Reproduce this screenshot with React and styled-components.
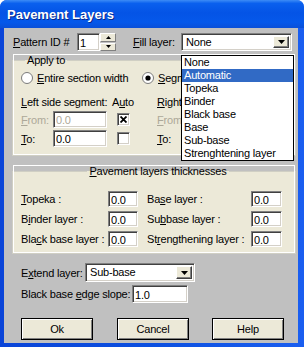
import React from "react";
import styled, { createGlobalStyle } from "styled-components";

const GlobalStyle = createGlobalStyle`
  html, body {
    margin: 0;
    padding: 0;
    background: #ffffff;
  }
  body {
    font-family: "Liberation Sans", Arial, sans-serif;
    font-size: 11px;
    letter-spacing: -0.2px;
    color: #000;
  }
`;

const layers = [
  "None",
  "Automatic",
  "Topeka",
  "Binder",
  "Black base",
  "Base",
  "Sub-base",
  "Strenghtening layer"
];

const Window = styled.div`
  position: relative;
  width: 304px;
  height: 347px;
  display: flex;
  flex-direction: column;
  background: linear-gradient(to right, #0a44d8 0%, #0b4fe0 50%, #1a5ef0 100%);
  border-radius: 7px 7px 0 0;
  overflow: hidden;
`;

const TitleBar = styled.div`
  height: 28px;
  flex: none;
  display: flex;
  align-items: center;
  padding-left: 7px;
  background: linear-gradient(
    to bottom,
    #3d8cf6 0%,
    #0a60ee 12%,
    #0454e6 45%,
    #0558ea 80%,
    #0a4fd8 100%
  );
  color: #fff;
  font-weight: bold;
  font-size: 13px;
  letter-spacing: 0;
  text-shadow: 1px 1px 0 #0b2a8a;
`;

const Body = styled.div`
  flex: 1;
  margin: 0 6px 4px 4px;
  background: #c0c0c0;
  padding: 5px 2px 0 8px;
  display: flex;
  flex-direction: column;
`;

const Row = styled.div`
  display: flex;
  align-items: center;
  height: ${(p) => p.h || 18}px;
  margin-top: ${(p) => p.mt || 0}px;
  margin-left: ${(p) => p.ml || 0}px;
`;

const Label = styled.span`
  flex: none;
  width: ${(p) => (p.w ? `${p.w}px` : "auto")};
  margin-left: ${(p) => p.ml || 0}px;
  color: ${(p) => (p.disabled ? "#aca899" : "#000")};
  white-space: nowrap;
  line-height: 14px;
`;

const TextBox = styled.input`
  box-sizing: border-box;
  flex: none;
  width: ${(p) => p.w}px;
  height: ${(p) => p.h || 17}px;
  margin: 0;
  padding: 1px 2px 0;
  font: inherit;
  font-size: 11px;
  letter-spacing: -0.2px;
  color: ${(p) => (p.disabled ? "#aca899" : "#000")};
  background: #fff;
  border: 1px solid;
  border-color: #808080 #ffffff #ffffff #808080;
  box-shadow: inset 1px 1px 0 #404040, inset -1px -1px 0 #d4d0c8;
  outline: none;
`;

const Spinner = styled.div`
  flex: none;
  width: 16px;
  height: 18px;
  display: flex;
  flex-direction: column;
  gap: 1px;
`;

const SpinHalf = styled.div`
  flex: 1;
  display: flex;
  align-items: center;
  justify-content: center;
  background: #ece9d8;
  border: 1px solid;
  border-color: #fff #808080 #808080 #fff;
`;

const Combo = styled.div`
  box-sizing: border-box;
  flex: none;
  width: ${(p) => p.w}px;
  height: ${(p) => p.h || 18}px;
  display: flex;
  align-items: stretch;
  background: #fff;
  border: 1px solid;
  border-color: #808080 #ffffff #ffffff #808080;
  box-shadow: inset 1px 1px 0 #404040, inset -1px -1px 0 #d4d0c8;
  padding: 2px;
`;

const ComboText = styled.span`
  flex: 1;
  line-height: 13px;
  padding-left: 2px;
`;

const ComboButton = styled.div`
  box-sizing: border-box;
  flex: none;
  width: 16px;
  display: flex;
  align-items: center;
  justify-content: center;
  background: #ece9d8;
  border: 1px solid;
  border-color: #fff #404040 #404040 #fff;
  box-shadow: inset -1px -1px 0 #808080;
`;

const Group = styled.fieldset`
  box-sizing: border-box;
  width: 284px;
  margin: ${(p) => p.mt || 0}px 0 0 0;
  padding: ${(p) => p.pad};
  min-width: 0;
  background: #ece9d8;
  border: 1px solid #d0cfc4;
  outline: 1px solid #ffffff;
  outline-offset: -2px;
`;

const Legend = styled.legend`
  padding: 0 2px;
  margin: ${(p) => (p.center ? "0 auto" : "0 0 0 4px")};
  line-height: 14px;
`;

const RadioRow = styled.div`
  display: flex;
  align-items: center;
  height: 14px;
`;

const RadioItem = styled.label`
  display: flex;
  align-items: center;
  gap: 4px;
  width: ${(p) => p.w}px;
  flex: none;
  white-space: nowrap;
`;

const SegmentRow = styled.div`
  display: flex;
  margin-top: 10px;
`;

const Segment = styled.div`
  flex: none;
  width: ${(p) => p.w}px;
  display: grid;
  grid-template-columns: 32px 54px auto;
  grid-template-rows: 14px 17px 17px;
  row-gap: 2px;
  align-items: center;
`;

const SegHead = styled.span`
  grid-column: 1 / 3;
  white-space: nowrap;
`;

const AutoHead = styled.span`
  padding-left: 5px;
`;

const CheckCell = styled.div`
  padding-left: 10px;
  display: flex;
  align-items: center;
`;

const CheckBox = styled.div`
  box-sizing: border-box;
  width: 13px;
  height: 13px;
  background: #fff;
  border: 1px solid;
  border-color: #808080 #fff #fff #808080;
  box-shadow: inset 1px 1px 0 #404040, inset -1px -1px 0 #d4d0c8;
  display: flex;
  align-items: center;
  justify-content: center;
`;

const ThickGrid = styled.div`
  display: grid;
  grid-template-columns: 87px 30px 9px 104px 31px;
  grid-auto-rows: 16px;
  row-gap: 4px;
  align-items: center;
`;

const ThickLabel = styled.span`
  white-space: nowrap;
  grid-column: ${(p) => p.col};
`;

const ButtonRow = styled.div`
  display: flex;
  margin: 15px 0 0 9px;
  gap: 23px;
`;

const Button = styled.button`
  box-sizing: border-box;
  width: 72px;
  height: 22px;
  margin: 0;
  padding: 0;
  font-family: inherit;
  font-size: 11px;
  letter-spacing: -0.2px;
  color: #000;
  background: #ece9d8;
  border: 1px solid #000;
  box-shadow: inset 1px 1px 0 #fff, inset -1px -1px 0 #808080;
  &:nth-child(2) {
    margin-left: 1px;
  }
`;

const DropList = styled.ul`
  position: absolute;
  left: 181px;
  top: 55px;
  width: 113px;
  margin: 0;
  padding: 0;
  list-style: none;
  background: #fff;
  border: 1px solid #000;
  box-sizing: border-box;
`;

const DropItem = styled.li`
  height: 13px;
  line-height: 13px;
  padding-left: 2px;
  white-space: nowrap;
  background: ${(p) => (p.active ? "#316ac5" : "transparent")};
  color: ${(p) => (p.active ? "#fff" : "#000")};
`;

const DownArrow = () => (
  <svg width="7" height="4" viewBox="0 0 7 4">
    <path d="M0 0h7L3.5 4z" fill="#000" />
  </svg>
);

const SpinArrow = ({ up }) => (
  <svg width="5" height="3" viewBox="0 0 5 3">
    <path d={up ? "M0 3h5L2.5 0z" : "M0 0h5L2.5 3z"} fill="#000" />
  </svg>
);

const Radio = ({ checked }) => (
  <svg width="12" height="12" viewBox="0 0 12 12">
    <circle cx="6" cy="6" r="5.5" fill="#fff" stroke="#7a7a7a" />
    {checked && <circle cx="6" cy="6" r="2.6" fill="#000" />}
  </svg>
);

const Cross = () => (
  <svg width="7" height="7" viewBox="0 0 7 7">
    <path d="M0.5 0.5L6.5 6.5M6.5 0.5L0.5 6.5" stroke="#000" strokeWidth="1.8" />
  </svg>
);

const SegmentBlock = ({ w, side, auto }) => (
  <Segment w={w}>
    <SegHead>
      <u>{side[0]}</u>
      {side.slice(1)} side segment:
    </SegHead>
    <AutoHead>
      A<u>u</u>to
    </AutoHead>
    <Label disabled>
      <u>F</u>rom:
    </Label>
    <TextBox w={54} disabled readOnly value="0.0" />
    <CheckCell>
      <CheckBox>{auto && <Cross />}</CheckBox>
    </CheckCell>
    <Label>
      <u>T</u>o:
    </Label>
    <TextBox w={54} readOnly value="0.0" />
    <CheckCell>
      <CheckBox />
    </CheckCell>
  </Segment>
);

const thicknesses = [
  [<><u>T</u>opeka :</>, <>Ba<u>s</u>e layer :</>],
  [<>B<u>i</u>nder layer :</>, <>Su<u>b</u>base layer :</>],
  [<>Bla<u>c</u>k base layer :</>, <>St<u>r</u>engthening layer :</>]
];

export default function App() {
  return (
    <>
      <GlobalStyle />
      <Window>
        <TitleBar>Pavement Layers</TitleBar>
        <Body>
          <Row ml={1}>
            <Label w={64}>
              <u>P</u>attern ID #
            </Label>
            <TextBox w={23} h={18} readOnly value="1" />
            <Spinner>
              <SpinHalf>
                <SpinArrow up />
              </SpinHalf>
              <SpinHalf>
                <SpinArrow />
              </SpinHalf>
            </Spinner>
            <Label w={48} ml={17}>
              <u>F</u>ill layer:
            </Label>
            <Combo w={111}>
              <ComboText>None</ComboText>
              <ComboButton>
                <DownArrow />
              </ComboButton>
            </Combo>
          </Row>

          <Group mt={2} pad="4px 0 8px 8px">
            <Legend>Apply to</Legend>
            <RadioRow>
              <RadioItem w={121}>
                <Radio />
                <span>
                  <u>E</u>ntire section width
                </span>
              </RadioItem>
              <RadioItem w={120}>
                <Radio checked />
                <span>
                  <u>S</u>egments only
                </span>
              </RadioItem>
            </RadioRow>
            <SegmentRow>
              <SegmentBlock w={136} side="Left" auto />
              <SegmentBlock w={130} side="Right" />
            </SegmentRow>
          </Group>

          <Group mt={8} pad="13px 0 6px 8px">
            <Legend center>
              <u>P</u>avement layers thicknesses
            </Legend>
            <ThickGrid>
              {thicknesses.map(([left, right], i) => (
                <React.Fragment key={i}>
                  <ThickLabel col={1}>{left}</ThickLabel>
                  <TextBox w={30} h={16} readOnly value="0.0" />
                  <ThickLabel col={4}>{right}</ThickLabel>
                  <TextBox w={31} h={16} readOnly value="0.0" />
                </React.Fragment>
              ))}
            </ThickGrid>
          </Group>

          <Row mt={9} ml={9} h={19}>
            <Label w={64}>
              E<u>x</u>tend layer:
            </Label>
            <Combo w={110} h={19}>
              <ComboText>Sub-base</ComboText>
              <ComboButton>
                <DownArrow />
              </ComboButton>
            </Combo>
          </Row>
          <Row mt={3} ml={9} h={18}>
            <Label w={111}>
              Black base <u>e</u>dge slope:
            </Label>
            <TextBox w={56} h={18} readOnly value="1.0" />
          </Row>

          <ButtonRow>
            <Button>Ok</Button>
            <Button>Cancel</Button>
            <Button>Help</Button>
          </ButtonRow>
        </Body>

        <DropList>
          {layers.map((name) => (
            <DropItem key={name} active={name === "Automatic"}>
              {name}
            </DropItem>
          ))}
        </DropList>
      </Window>
    </>
  );
}
